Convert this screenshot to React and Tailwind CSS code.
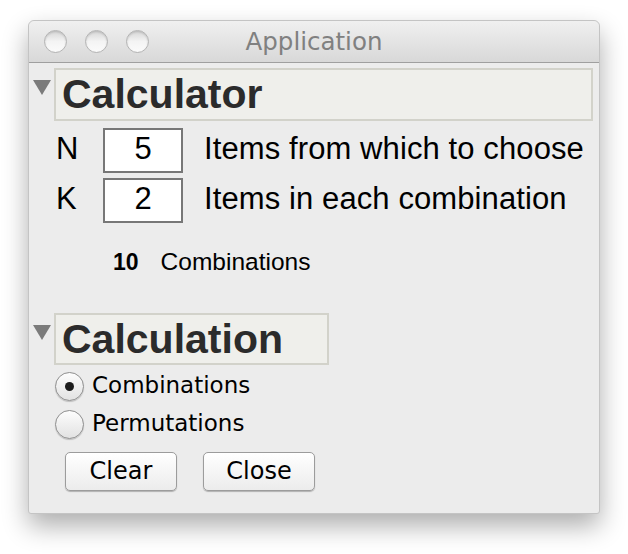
import React, { useState } from 'react'

const helv = { fontFamily: '"Liberation Sans", Arial, sans-serif' }
const lucida = { fontFamily: '"DejaVu Sans", "Noto Sans", sans-serif' }

function Light() {
  return (
    <div className="w-[23px] h-[23px] rounded-full border border-[#b4b4b4] bg-gradient-to-b from-[#d6d6d6] via-[#f4f4f4] to-[#fbfbfb] shadow-[inset_0_1px_2px_rgba(0,0,0,0.15)]" />
  )
}

function Triangle() {
  return (
    <svg width="18" height="15" viewBox="0 0 18 15" className="shrink-0">
      <polygon points="0,0 18,0 9,15" fill="#7b7b7b" />
    </svg>
  )
}

function Radio({ checked, label, onClick }) {
  return (
    <div className="flex items-center h-[28px] cursor-default" onClick={onClick}>
      <div className="w-[29px] h-[29px] rounded-full border border-[#8e8e8e] bg-gradient-to-b from-[#fdfdfd] to-[#e2e2e2] shadow-[0_1px_1px_rgba(0,0,0,0.2)] flex items-center justify-center">
        {checked && <div className="w-[9px] h-[9px] rounded-full bg-[#1c1c1c]" />}
      </div>
      <span className="ml-[8px] text-[23px] text-black leading-none pb-[1px]" style={lucida}>
        {label}
      </span>
    </div>
  )
}

function Button({ children }) {
  return (
    <button
      className="w-[112px] h-[39px] rounded-[5px] border border-[#9c9c9c] bg-gradient-to-b from-[#ffffff] to-[#ececec] shadow-[0_1px_1px_rgba(0,0,0,0.25)] text-[24px] text-black leading-none flex items-center justify-center pb-[2px]"
      style={lucida}
    >
      {children}
    </button>
  )
}

function NumBox({ value }) {
  return (
    <div className="w-[80px] h-[45px] border-2 border-[#777] bg-white flex items-center justify-center text-[31px] text-black leading-none pb-[5px]" style={helv}>
      {value}
    </div>
  )
}

export default function App() {
  const [calc, setCalc] = useState('comb')

  return (
    <div className="w-[628px] h-[554px] bg-white overflow-hidden">
      <div className="ml-[28px] mt-[20px] w-[572px] h-[494px] bg-[#ececec] rounded-t-[6px] rounded-b-[3px] border border-[#c4c4c4] shadow-[0_12px_26px_rgba(0,0,0,0.32)] flex flex-col">
        {/* title bar */}
        <div className="h-[42px] shrink-0 rounded-t-[6px] bg-gradient-to-b from-[#f0f0f0] to-[#d8d8d8] border-b border-[#9f9f9f] flex items-center relative">
          <div className="flex gap-[18px] pl-[15px]">
            <Light />
            <Light />
            <Light />
          </div>
          <div className="absolute inset-0 flex items-center justify-center text-[24.5px] text-[#808080] pt-[1px]" style={lucida}>
            Application
          </div>
        </div>

        {/* Calculator section */}
        <div className="flex items-start mt-[5px] pl-[4px]">
          <div className="mt-[12px]"><Triangle /></div>
          <div className="ml-[3px] w-[539px] h-[53px] border-2 border-[#d2d2ca] bg-[#efefeb] flex items-center pl-[6px]">
            <span className="text-[41px] font-bold text-[#2b2b2b] leading-none" style={helv}>Calculator</span>
          </div>
        </div>

        <div className="flex items-center mt-[7px] h-[45px]">
          <span className="w-[74px] pl-[27px] text-[31px] text-black leading-none pb-[5px]" style={helv}>N</span>
          <NumBox value="5" />
          <span className="ml-[21px] text-[31px] text-black leading-none pb-[5px] tracking-[0.1px]" style={helv}>Items from which to choose</span>
        </div>
        <div className="flex items-center mt-[5px] h-[45px]">
          <span className="w-[74px] pl-[27px] text-[31px] text-black leading-none pb-[5px]" style={helv}>K</span>
          <NumBox value="2" />
          <span className="ml-[21px] text-[31px] text-black leading-none pb-[5px] tracking-[0.1px]" style={helv}>Items in each combination</span>
        </div>

        <div className="flex items-center mt-[24px] h-[30px] pl-[84px] text-[24.5px] text-black" style={helv}>
          <span className="font-bold text-[23px]">10</span>
          <span className="ml-[22px]">Combinations</span>
        </div>

        {/* Calculation section */}
        <div className="flex items-start mt-[36px] pl-[4px]">
          <div className="mt-[12px]"><Triangle /></div>
          <div className="ml-[3px] w-[275px] h-[52px] border-2 border-[#d2d2ca] bg-[#efefeb] flex items-center pl-[6px]">
            <span className="text-[41px] font-bold text-[#2b2b2b] leading-none" style={helv}>Calculation</span>
          </div>
        </div>

        <div className="flex flex-col gap-[10px] mt-[7px] pl-[26px]">
          <Radio label="Combinations" checked={calc === 'comb'} onClick={() => setCalc('comb')} />
          <Radio label="Permutations" checked={calc === 'perm'} onClick={() => setCalc('perm')} />
        </div>

        <div className="flex gap-[26px] mt-[14px] pl-[36px]">
          <Button>Clear</Button>
          <Button>Close</Button>
        </div>
      </div>
    </div>
  )
}
